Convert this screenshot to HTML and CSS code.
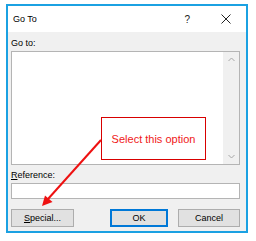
FILE: index.html
```html
<!DOCTYPE html>
<html lang="en">
<head>
  <meta charset="UTF-8" />
  <title>Go To</title>
  <link rel="stylesheet" href="styles.css">
</head>
<body>
  <div class="dialog">
    <div class="titlebar">
      <span class="title">Go To</span>
      <span class="help">?</span>
      <svg class="close" width="10" height="10" viewBox="0 0 10 10">
        <path d="M0.5 0.5 L9.5 9.5 M9.5 0.5 L0.5 9.5" stroke="#222" stroke-width="1" fill="none"/>
      </svg>
    </div>
    <div class="body">
      <div class="label">Go to:</div>
      <div class="listbox">
        <div class="scrollbar">
          <svg width="7" height="5" viewBox="0 0 7 5"><path d="M0.5 4 L3.5 1 L6.5 4" stroke="#a6a6a6" fill="none"/></svg>
          <svg width="7" height="5" viewBox="0 0 7 5"><path d="M0.5 1 L3.5 4 L6.5 1" stroke="#a6a6a6" fill="none"/></svg>
        </div>
      </div>
      <div class="label gap"><u>R</u>eference:</div>
      <div class="input"></div>
      <div class="buttons">
        <button class="btn special"><u>S</u>pecial...</button>
        <button class="btn ok">OK</button>
        <button class="btn cancel">Cancel</button>
      </div>
    </div>
  </div>

  <div class="callout">Select this option</div>
  <svg class="arrow" width="256" height="241" viewBox="0 0 256 241">
    <line x1="101" y1="140" x2="48" y2="199" stroke="#ee1111" stroke-width="2"/>
    <polygon points="42,206 52.5,202 45,195.5" fill="#ee1111"/>
  </svg>
</body>
</html>
```

FILE: styles.css
```css
body {
  margin: 0;
  background-color: #fff;
  font-family: "Liberation Sans", Arial, sans-serif;
  font-size: 9px;
  color: #000;
}
.dialog {
  margin: 4px 0 0 6px;
  width: 242px;
  height: 229px;
  border: 2px solid #1ba1e2;
  box-sizing: border-box;
  display: flex;
  flex-direction: column;
  background-color: #f0f0f0;
}
.titlebar {
  height: 26px;
  background-color: #fff;
  display: flex;
  align-items: center;
  padding-left: 5px;
}
.title {
  flex: 1;
  font-size: 9px;
}
.help {
  font-size: 10px;
  color: #222;
  margin-right: 31px;
}
.close {
  margin-right: 15px;
}
.body {
  flex: 1;
  padding: 0 6px 0 3px;
  display: flex;
  flex-direction: column;
}
.label {
  height: 12px;
  line-height: 12px;
  margin-top: 5px;
}
.label.gap {
  margin-top: 4px;
}
.listbox {
  margin-top: 2px;
  height: 114px;
  background-color: #fff;
  border: 1px solid #b4b4b4;
  box-sizing: border-box;
  display: flex;
  justify-content: flex-end;
}
.scrollbar {
  width: 16px;
  background-color: #f0f0f0;
  display: flex;
  flex-direction: column;
  justify-content: space-between;
  align-items: center;
  padding: 5px 0;
}
.input {
  margin-top: 2px;
  height: 16px;
  background-color: #fff;
  border: 1px solid #b4b4b4;
  box-sizing: border-box;
}
.buttons {
  margin-top: 10px;
  display: flex;
}
.btn {
  height: 18px;
  padding: 0;
  font-family: "Liberation Sans", Arial, sans-serif;
  font-size: 9px;
  color: #000;
  background-color: #e1e1e1;
  border: 1px solid #adadad;
  box-sizing: border-box;
}
.special {
  width: 63px;
}
.ok {
  width: 58px;
  margin-left: auto;
  border-color: #0078d7;
  box-shadow: inset 0 0 0 1px #0078d7;
}
.cancel {
  width: 62px;
  margin-left: 10px;
}
.callout {
  position: absolute;
  left: 101px;
  top: 117px;
  width: 105px;
  height: 43px;
  box-sizing: border-box;
  border: 1px solid #d80000;
  background-color: #fff;
  color: #f01818;
  font-size: 11px;
  display: flex;
  align-items: center;
  justify-content: center;
}
.arrow {
  position: absolute;
  left: 0;
  top: 0;
  pointer-events: none;
}
```
